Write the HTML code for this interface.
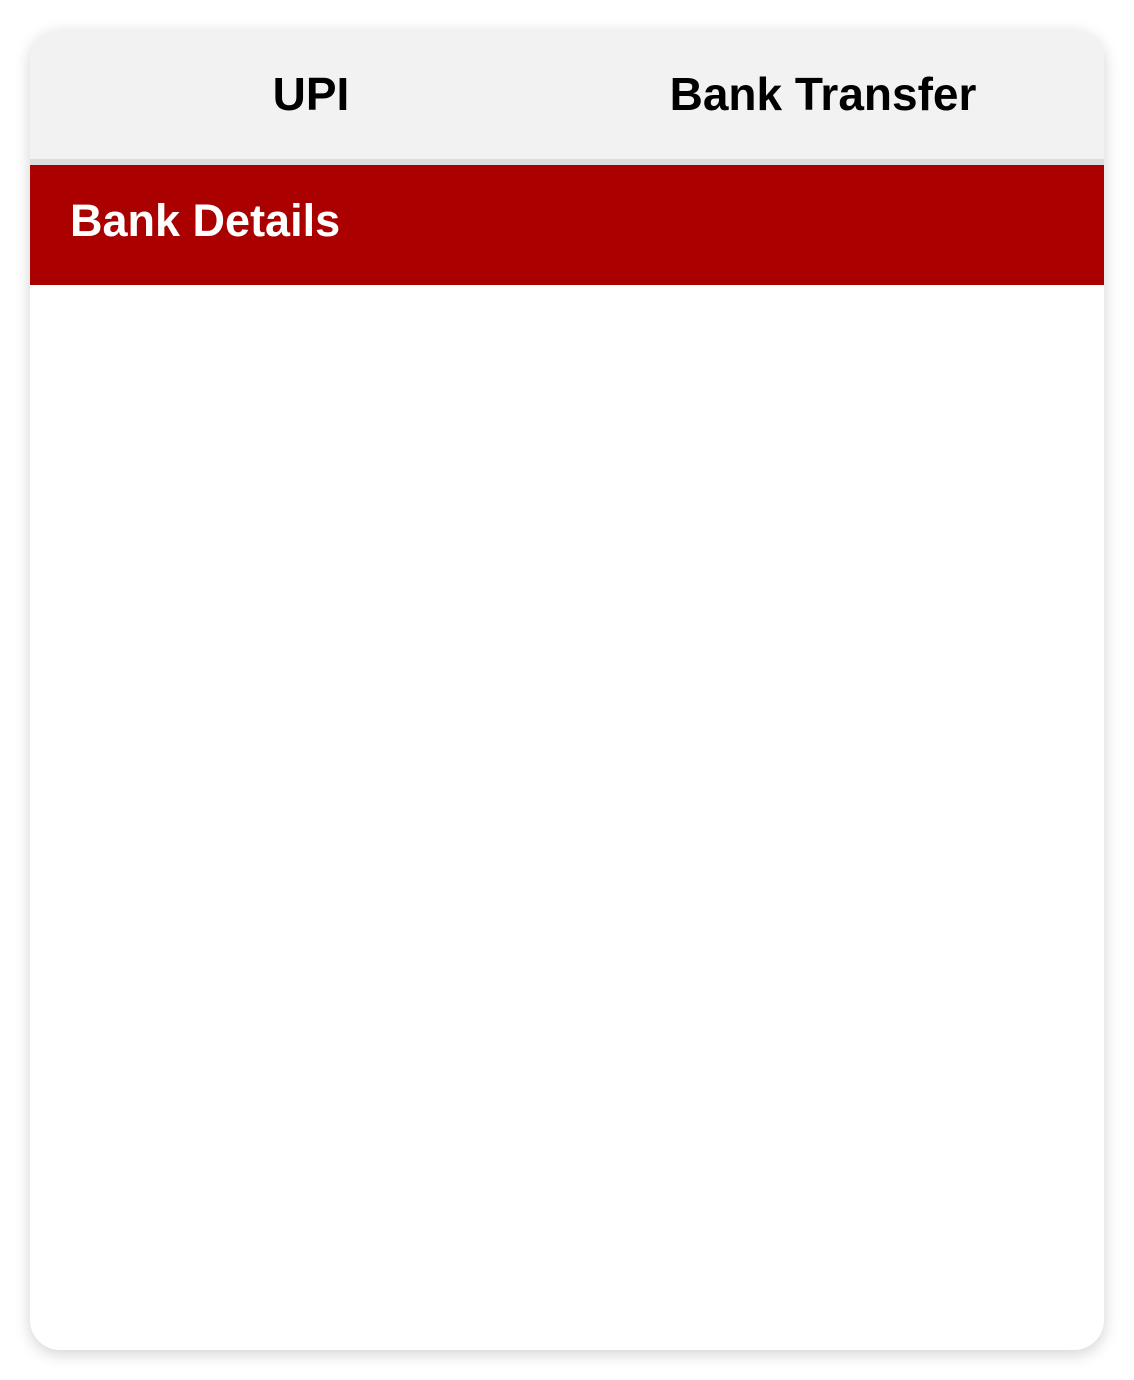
<!DOCTYPE html>
<html><head><style>
body{margin:0;width:1134px;height:1380px;background:#fff;font-family:"Liberation Sans",sans-serif;}
.card{position:absolute;left:30px;top:30px;width:1074px;height:1320px;border-radius:30px;background:#fff;box-shadow:0 4px 16px rgba(0,0,0,0.18);overflow:hidden;}
.hdr{height:129px;background:#f2f2f2;border-bottom:6px solid #ddd;position:relative;}
.t{position:absolute;top:0;height:129px;line-height:129px;font-size:46px;font-weight:bold;color:#000;transform:translateX(-50%);white-space:nowrap;}
.red{height:120px;background:#aa0000;color:#fff;font-size:45px;font-weight:bold;line-height:112px;padding-left:40px;}
</style></head><body>
<div class="card">
<div class="hdr"><span class="t" style="left:281px">UPI</span><span class="t" style="left:793px">Bank Transfer</span></div>
<div class="red">Bank Details</div>
</div>
</body></html>
